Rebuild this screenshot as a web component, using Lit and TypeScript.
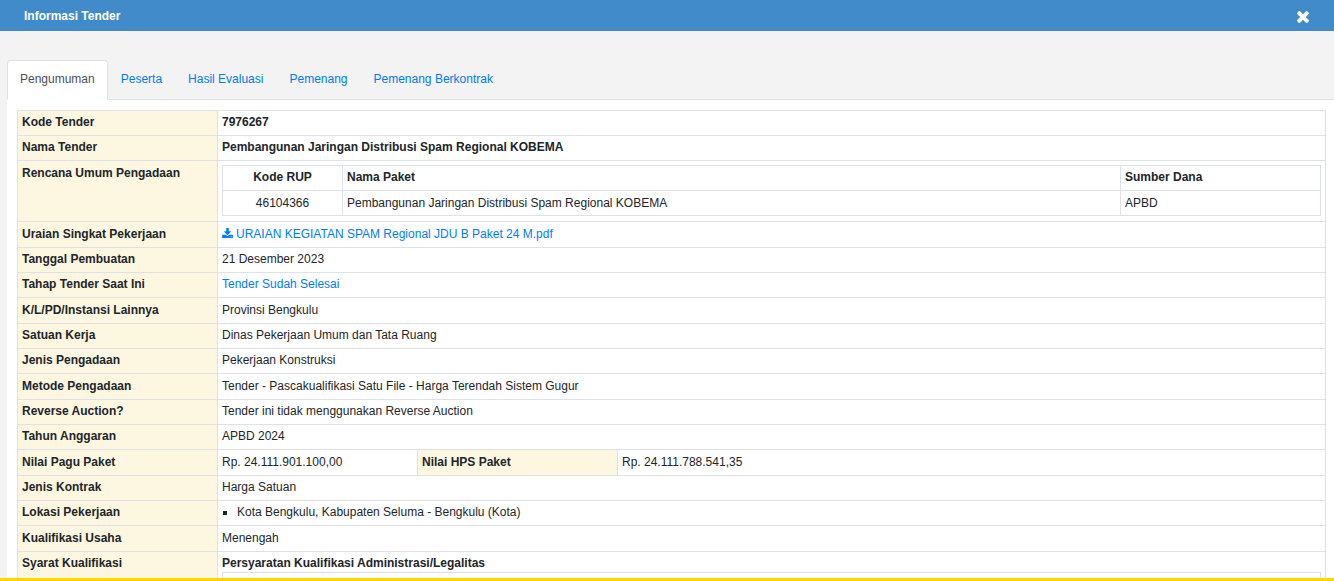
import { LitElement, html, css, svg } from "lit";
import { customElement, state } from "lit/decorators.js";
import { classMap } from "lit/directives/class-map.js";

const closeIcon = html`<svg class="close-icon" viewBox="302 366 1188 1188" aria-hidden="true">
  ${svg`<path fill="currentColor" d="M1490 1322q0 40-28 68l-136 136q-28 28-68 28t-68-28l-294-294-294 294q-28 28-68 28t-68-28l-136-136q-28-28-28-68t28-68l294-294-294-294q-28-28-28-68t28-68l136-136q28-28 68-28t68 28l294 294 294-294q28-28 68-28t68 28l136 136q28 28 28 68t-28 68l-294 294 294 294q28 28 28 68z"/>`}
</svg>`;

const downloadIcon = html`<svg class="download-icon" viewBox="64 0 1664 1536" aria-hidden="true">
  ${svg`<path fill="currentColor" d="M1344 1344q0-26-19-45t-45-19-45 19-19 45 19 45 45 19 45-19 19-45zm256 0q0-26-19-45t-45-19-45 19-19 45 19 45 45 19 45-19 19-45zm128-224v320q0 40-28 68t-68 28h-1472q-40 0-68-28t-28-68v-320q0-40 28-68t68-28h465l135 136q58 56 136 56t136-56l136-136h464q40 0 68 28t28 68zm-325-569q17 41-14 70l-448 448q-18 19-45 19t-45-19l-448-448q-31-29-14-70 17-39 59-39h256v-448q0-26 19-45t45-19h256q26 0 45 19t19 45v448h256q42 0 59 39z"/>`}
</svg>`;

const tabs = ["Pengumuman", "Peserta", "Hasil Evaluasi", "Pemenang", "Pemenang Berkontrak"];

const rupTable = html`<table class="grid nested">
  <colgroup><col class="rup-code" /><col /><col class="rup-source" /></colgroup>
  <thead>
    <tr><th class="center" scope="col">Kode RUP</th><th scope="col">Nama Paket</th><th scope="col">Sumber Dana</th></tr>
  </thead>
  <tbody>
    <tr><td class="center">46104366</td><td>Pembangunan Jaringan Distribusi Spam Regional KOBEMA</td><td>APBD</td></tr>
  </tbody>
</table>`;

const row = (label: string, value: unknown) => html`<tr>
  <th class="label" scope="row">${label}</th>
  <td colspan="3">${value}</td>
</tr>`;

@customElement("app-root")
export class AppRoot extends LitElement {
  @state() private active = 0;

  static styles = css`
    :host {
      display: flex;
      flex-direction: column;
      height: 100vh;
      overflow: hidden;
      background: #f3f3f3;
      color: #212529;
      font: 12px/18px "Liberation Sans", Arial, sans-serif;
    }
    .header {
      flex: none;
      display: flex;
      align-items: center;
      justify-content: space-between;
      height: 31px;
      padding: 0 24px;
      background: #428bca;
      color: #fff;
    }
    .title {
      margin: 0;
      font-size: 12px;
    }
    .close {
      display: flex;
      padding: 2px 1px 0;
      border: 0;
      background: none;
      color: inherit;
      cursor: pointer;
    }
    .close-icon {
      width: 12px;
      height: 12px;
    }
    .content {
      flex: 1;
      min-height: 0;
      overflow: hidden;
      padding: 29px 0 0 7px;
    }
    .tabs {
      display: flex;
      border-bottom: 1px solid #dee2e6;
    }
    .tab {
      margin: 0 0 -1px;
      padding: 9px 12px 11px;
      border: 1px solid transparent;
      border-radius: 4px 4px 0 0;
      background: none;
      color: #007bff;
      font: inherit;
      cursor: pointer;
    }
    .tab.active {
      border-color: #dee2e6 #dee2e6 #fff;
      background: #fff;
      color: #495057;
    }
    .panel {
      padding: 10px 8px 10px 10px;
      background: #fff;
    }
    .grid {
      width: 100%;
      border-collapse: collapse;
      table-layout: fixed;
    }
    .grid th,
    .grid td {
      height: 18px;
      padding: 2px 4px 4px;
      border: 1px solid #dee2e6;
      text-align: left;
      vertical-align: top;
    }
    .details > tbody > tr:nth-child(3n + 4) > * {
      padding-top: 3px;
    }
    .grid .label {
      background: #fdf7e2;
    }
    .grid .center {
      text-align: center;
    }
    .grid .holder {
      padding: 4px 4px 5px;
    }
    .grid .label.roomy {
      padding-top: 3px;
    }
    .nested tbody td {
      padding: 3px 4px;
    }
    .narrow {
      width: 200px;
    }
    .rup-code {
      width: 120px;
    }
    .rup-source {
      width: 200px;
    }
    a {
      color: #007bff;
      text-decoration: none;
    }
    .download-icon {
      width: 11px;
      height: 10px;
      margin-right: 3px;
    }
    .places {
      margin: 0;
      padding-left: 15px;
      list-style: square;
    }
    .footer-bar {
      flex: none;
      height: 3px;
      background: #ffd600;
    }
  `;

  private renderDetails() {
    return html`<table class="grid details">
      <colgroup><col class="narrow" /><col class="narrow" /><col class="narrow" /><col /></colgroup>
      <tbody>
        ${row("Kode Tender", html`<strong>7976267</strong>`)}
        ${row("Nama Tender", html`<strong>Pembangunan Jaringan Distribusi Spam Regional KOBEMA</strong>`)}
        <tr>
          <th class="label roomy" scope="row">Rencana Umum Pengadaan</th>
          <td class="holder" colspan="3">${rupTable}</td>
        </tr>
        ${row("Uraian Singkat Pekerjaan", html`<a href="#">${downloadIcon}URAIAN KEGIATAN SPAM Regional JDU B Paket 24 M.pdf</a>`)}
        ${row("Tanggal Pembuatan", "21 Desember 2023")}
        ${row("Tahap Tender Saat Ini", html`<a href="#">Tender Sudah Selesai</a>`)}
        ${row("K/L/PD/Instansi Lainnya", "Provinsi Bengkulu")}
        ${row("Satuan Kerja", "Dinas Pekerjaan Umum dan Tata Ruang")}
        ${row("Jenis Pengadaan", "Pekerjaan Konstruksi")}
        ${row("Metode Pengadaan", "Tender - Pascakualifikasi Satu File - Harga Terendah Sistem Gugur")}
        ${row("Reverse Auction?", "Tender ini tidak menggunakan Reverse Auction")}
        ${row("Tahun Anggaran", "APBD 2024")}
        <tr>
          <th class="label" scope="row">Nilai Pagu Paket</th>
          <td>Rp. 24.111.901.100,00</td>
          <th class="label" scope="row">Nilai HPS Paket</th>
          <td>Rp. 24.111.788.541,35</td>
        </tr>
        ${row("Jenis Kontrak", "Harga Satuan")}
        ${row("Lokasi Pekerjaan", html`<ul class="places"><li>Kota Bengkulu, Kabupaten Seluma - Bengkulu (Kota)</li></ul>`)}
        ${row("Kualifikasi Usaha", "Menengah")}
        ${row("Syarat Kualifikasi", html`<strong>Persyaratan Kualifikasi Administrasi/Legalitas</strong>
          <table class="grid nested"><tbody><tr><td></td></tr></tbody></table>`)}
      </tbody>
    </table>`;
  }

  render() {
    return html`
      <header class="header">
        <h1 class="title">Informasi Tender</h1>
        <button class="close" type="button" aria-label="Tutup">${closeIcon}</button>
      </header>
      <main class="content">
        <div class="tabs" role="tablist">
          ${tabs.map(
            (name, i) => html`<button
              type="button"
              role="tab"
              aria-selected=${i === this.active ? "true" : "false"}
              class=${classMap({ tab: true, active: i === this.active })}
              @click=${() => (this.active = i)}
            >${name}</button>`
          )}
        </div>
        <section class="panel" role="tabpanel">${this.renderDetails()}</section>
      </main>
      <div class="footer-bar"></div>
    `;
  }
}
